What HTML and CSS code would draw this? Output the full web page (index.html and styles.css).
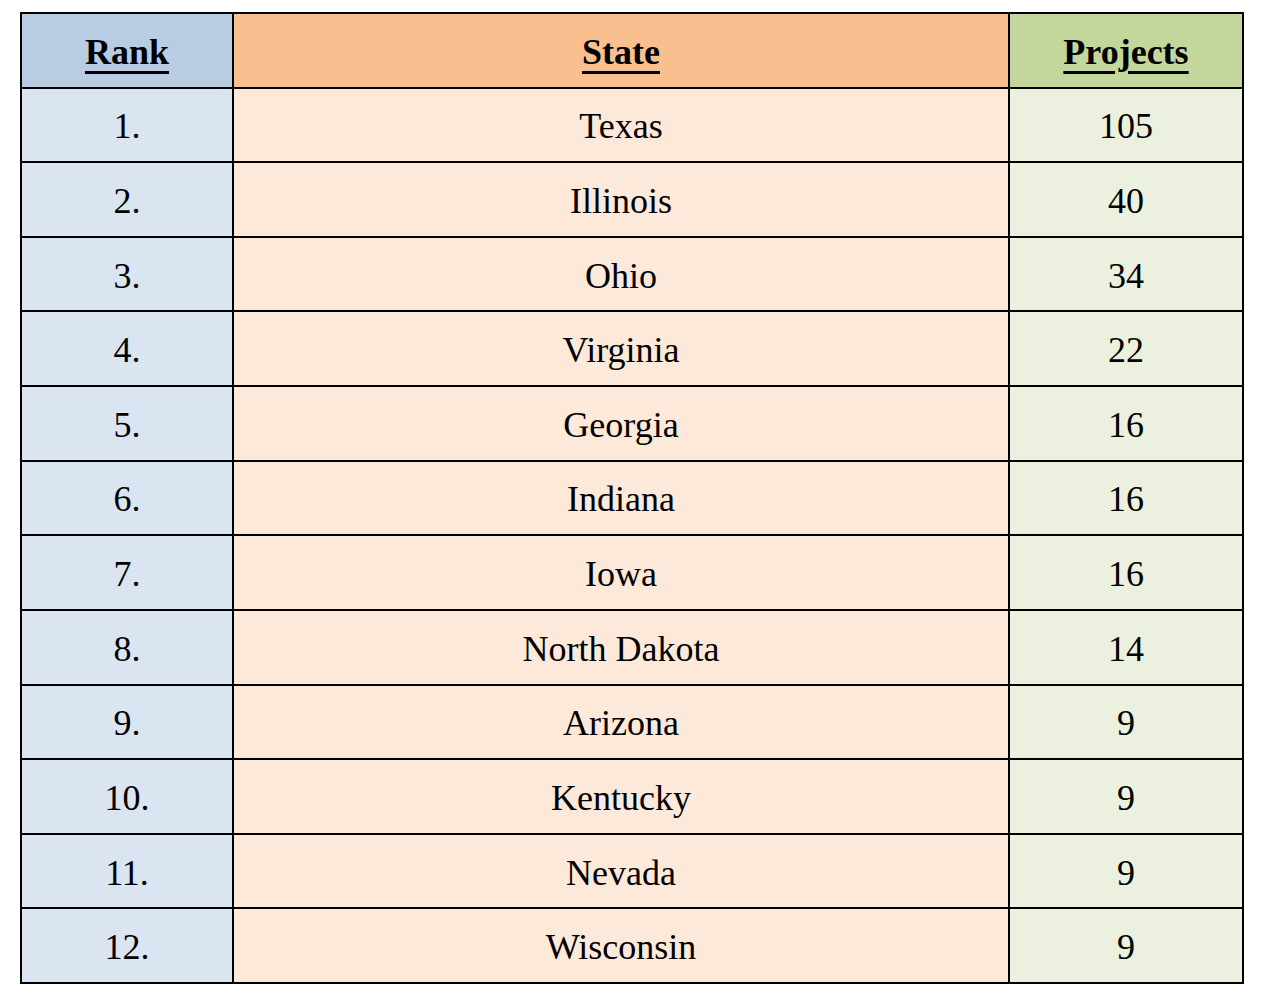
FILE: index.html
```html
<!DOCTYPE html>
<html lang="en">
<head>
<meta charset="utf-8">
<title>Projects by State</title>
<link rel="stylesheet" href="styles.css">
</head>
<body>
<div class="table">
  <div class="cell head rank"><span class="u">Rank</span></div>
  <div class="cell head state"><span class="u">State</span></div>
  <div class="cell head proj"><span class="u">Projects</span></div>

  <div class="cell rank">1.</div><div class="cell state">Texas</div><div class="cell proj">105</div>
  <div class="cell rank">2.</div><div class="cell state">Illinois</div><div class="cell proj">40</div>
  <div class="cell rank">3.</div><div class="cell state">Ohio</div><div class="cell proj">34</div>
  <div class="cell rank">4.</div><div class="cell state">Virginia</div><div class="cell proj">22</div>
  <div class="cell rank">5.</div><div class="cell state">Georgia</div><div class="cell proj">16</div>
  <div class="cell rank">6.</div><div class="cell state">Indiana</div><div class="cell proj">16</div>
  <div class="cell rank">7.</div><div class="cell state">Iowa</div><div class="cell proj">16</div>
  <div class="cell rank">8.</div><div class="cell state">North Dakota</div><div class="cell proj">14</div>
  <div class="cell rank">9.</div><div class="cell state">Arizona</div><div class="cell proj">9</div>
  <div class="cell rank">10.</div><div class="cell state">Kentucky</div><div class="cell proj">9</div>
  <div class="cell rank">11.</div><div class="cell state">Nevada</div><div class="cell proj">9</div>
  <div class="cell rank">12.</div><div class="cell state">Wisconsin</div><div class="cell proj">9</div>
</div>
</body>
</html>
```

FILE: styles.css
```css
html, body {
  margin: 0;
  padding: 0;
  background: #ffffff;
}

body {
  padding: 12px 0 0 20px;
  font-family: "Liberation Serif", "Times New Roman", serif;
  color: #000000;
}

.table {
  box-sizing: border-box;
  width: 1224px;
  height: 972px;
  display: grid;
  grid-template-columns: 212px 776px 234px;
  grid-template-rows: repeat(13, 1fr);
  border-top: 2px solid #000;
  border-left: 2px solid #000;
}

.cell {
  display: flex;
  align-items: center;
  justify-content: center;
  padding-top: 3px;
  border-right: 2px solid #000;
  border-bottom: 2px solid #000;
  font-size: 36px;
  line-height: 1;
}

.rank { background: #dbe5f1; }
.state { background: #fde9d9; }
.proj { background: #ebf1de; }

.head { font-weight: bold; }
.head.rank { background: #b8cce4; }
.head.state { background: #fabf8f; }
.head.proj { background: #c3d69b; }

.u {
  text-decoration: underline;
  text-decoration-thickness: 3px;
  text-underline-offset: 7px;
}
```
